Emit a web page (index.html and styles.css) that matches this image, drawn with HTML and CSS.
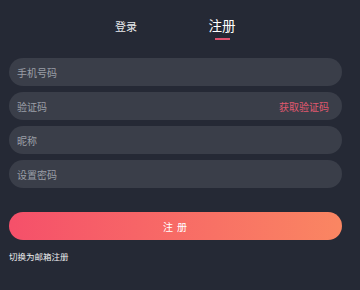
FILE: index.html
```html
<!DOCTYPE html>
<html>

<head>
	<meta charset="UTF-8">
	<meta name="viewport" content="width=device-width, initial-scale=1">
	<title>注册</title>
	<link rel="stylesheet" href="styles.css">
</head>

<body>
	<main class="form">
		<div class="tabs">
			<div class="tab">登录</div>
			<div class="tab tab-active">注册<span class="tab-line"></span></div>
		</div>

		<div class="field"><input class="input" type="text" placeholder="手机号码"></div>
		<div class="field">
			<input class="input" type="text" placeholder="验证码">
			<span class="get-code">获取验证码</span>
		</div>
		<div class="field"><input class="input" type="text" placeholder="昵称"></div>
		<div class="field"><input class="input" type="password" placeholder="设置密码"></div>

		<button class="submit-button">注 册</button>
		<p class="switch-link">切换为邮箱注册</p>
	</main>
</body>

</html>
```

FILE: styles.css
```css
body {
	margin: 0;
	background-color: #252935;
	font-family: "Noto Sans CJK SC", "Noto Sans", sans-serif;
	color: white;
}

.form {
	width: 333px;
	margin-left: 9px;
}

.tabs {
	display: flex;
	justify-content: center;
	height: 58px;
	padding-right: 3px;
	box-sizing: border-box;
}

.tab {
	width: 96px;
	text-align: center;
	font-size: 11px;
	line-height: 14px;
	padding-top: 19px;
	color: #e8e9ec;
	position: relative;
}

.tab-active {
	font-size: 13.5px;
	line-height: 16px;
	padding-top: 17px;
	color: white;
}

.tab-line {
	position: absolute;
	left: 50%;
	top: 38px;
	width: 15px;
	height: 2px;
	margin-left: -7px;
	background-color: #e0526f;
}

.field {
	display: flex;
	align-items: center;
	height: 28px;
	margin-bottom: 6px;
	padding: 0 13px 0 8px;
	border-radius: 14px;
	background-color: #3a3e49;
}

.input {
	flex: 1;
	min-width: 0;
	border: none;
	outline: none;
	background: transparent;
	font-family: inherit;
	font-size: 10px;
	color: white;
	padding: 0;
}

.input::placeholder {
	color: #9b9ea7;
}

.get-code {
	font-size: 10px;
	color: #e0596f;
}

.submit-button {
	display: block;
	width: 100%;
	height: 28px;
	margin-top: 24px;
	border: none;
	border-radius: 14px;
	background: linear-gradient(to right, #f5506a, #fa8662);
	font-family: inherit;
	font-size: 10px;
	letter-spacing: 1px;
	color: white;
	cursor: pointer;
}

.switch-link {
	margin: 10px 0 0;
	font-size: 8.5px;
	line-height: 12px;
	color: #f0f0f2;
}
```
